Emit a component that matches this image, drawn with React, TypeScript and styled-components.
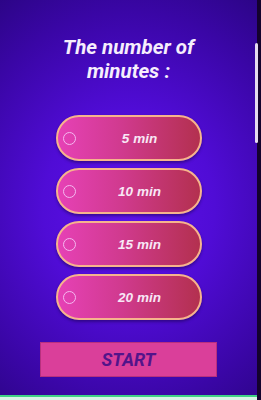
import React, { useState } from 'react';
import styled, { createGlobalStyle } from 'styled-components';

const GlobalStyle = createGlobalStyle`
  html, body {
    margin: 0;
    padding: 0;
    background: #1a0350;
  }
  * {
    box-sizing: border-box;
  }
`;

// Tela inteira: área do quiz + faixa escura à direita
const Frame = styled.div`
  position: relative;
  width: 261px;
  height: 400px;
  display: flex;
  overflow: hidden;
  font-family: Roboto, 'Liberation Sans', sans-serif;
`;

const Screen = styled.div`
  width: 257px;
  height: 400px;
  display: flex;
  flex-direction: column;
  align-items: center;
  background: radial-gradient(
    ellipse 95% 70% at 50% 52%,
    #5e12ea 0%,
    #500cd6 35%,
    #3a06a6 70%,
    #26047a 100%
  );
`;

const Edge = styled.div`
  width: 4px;
  height: 400px;
  background: #14022e;
`;

const Titulo = styled.h1`
  margin: 35px 0 0;
  font-size: 20.5px;
  line-height: 24px;
  font-weight: 700;
  font-style: italic;
  color: #f6eefc;
  text-align: center;
`;

const Lista = styled.div`
  margin-top: 32px;
  display: flex;
  flex-direction: column;
  gap: 7px;
`;

const Opcao = styled.button<{ $ativo: boolean }>`
  width: 146px;
  height: 46px;
  padding: 0 0 0 5px;
  display: flex;
  align-items: center;
  border: 2px solid #f6b48c;
  border-radius: 23px;
  background: linear-gradient(90deg, #e641b6 0%, #d03a8e 45%, #b3304f 100%);
  box-shadow: 0 2px 3px rgba(20, 0, 60, 0.45);
  cursor: pointer;
  filter: ${(p) => (p.$ativo ? 'brightness(1.1)' : 'none')};
`;

const Radio = styled.span<{ $ativo: boolean }>`
  width: 13px;
  height: 13px;
  flex: none;
  border-radius: 50%;
  border: 1.5px solid #f4b8f0;
  background: ${(p) => (p.$ativo ? '#f4b8f0' : 'transparent')};
`;

const Rotulo = styled.span`
  flex: 1;
  padding-left: 4px;
  text-align: center;
  font-size: 13.5px;
  font-weight: 700;
  font-style: italic;
  color: #f8e8f6;
`;

const Botao = styled.button`
  margin-top: 22px;
  width: 177px;
  height: 35px;
  border: 1px solid #b8307e;
  background: #da3f9a;
  font-family: Roboto, 'Liberation Sans', sans-serif;
  font-size: 18px;
  font-weight: 700;
  font-style: italic;
  color: #52148a;
  cursor: pointer;
`;

const Rodape = styled.div`
  margin-top: auto;
  width: 100%;
  height: 5px;
  border-top: 2px solid #3fd386;
  background: #d8f4e6;
`;

// barra de rolagem por cima do conteúdo
const Rolagem = styled.div`
  position: absolute;
  left: 255px;
  top: 43px;
  width: 3px;
  height: 100px;
  border-radius: 2px;
  background: #e6dcf0;
`;

const minutos = [5, 10, 15, 20];

export default function App() {
  const [escolhido, setEscolhido] = useState<number | null>(null);

  return (
    <>
      <GlobalStyle />
      <Frame>
        <Screen>
          <Titulo>
            The number of
            <br />
            minutes :
          </Titulo>
          <Lista>
            {minutos.map((m) => (
              <Opcao key={m} $ativo={escolhido === m} onClick={() => setEscolhido(m)}>
                <Radio $ativo={escolhido === m} />
                <Rotulo>{m} min</Rotulo>
              </Opcao>
            ))}
          </Lista>
          <Botao>START</Botao>
          <Rodape />
        </Screen>
        <Edge />
        <Rolagem />
      </Frame>
    </>
  );
}
